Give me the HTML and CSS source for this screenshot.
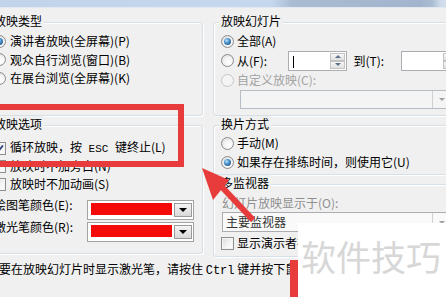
FILE: index.html
```html
<!DOCTYPE html>
<html lang="zh-CN">
<head>
<meta charset="utf-8">
<title>设置放映方式</title>
<link rel="stylesheet" href="styles.css">
</head>
<body>
<div class="titlebar"></div>
<div class="dialog">
  <section class="group g-left g-type">
    <div class="gtitle">放映类型</div>
    <div class="rows rows-type">
      <div class="row r185"><span class="radio on"></span><span>演讲者放映(全屏幕)(P)</span></div>
      <div class="row r185"><span class="radio"></span><span>观众自行浏览(窗口)(B)</span></div>
      <div class="row r185"><span class="radio"></span><span>在展台浏览(全屏幕)(K)</span></div>
    </div>
  </section>

  <section class="group g-right g-slides">
    <div class="gtitle">放映幻灯片</div>
    <div class="rows rows-slides">
      <div class="row r19"><span class="radio on"></span><span>全部(A)</span></div>
      <div class="row r20"><span class="radio"></span><span class="lbl-from">从(F):</span><span class="spin"><span class="caret"></span><span class="spinbtns"><span class="sb"><span class="tri-up"></span></span><span class="sb"><span class="tri-down"></span></span></span></span><span class="lbl-to">到(T):</span><span class="spin"><span class="nocaret"></span><span class="spinbtns"><span class="sb"><span class="tri-up"></span></span><span class="sb"><span class="tri-down"></span></span></span></span></div>
      <div class="row r19 dis"><span class="radio off"></span><span>自定义放映(C):</span></div>
      <div class="combo combo-custom"><span class="ctext"></span><span class="cbtn"><span class="ctri"></span></span></div>
    </div>
  </section>

  <section class="group g-left g-opts">
    <div class="gtitle">放映选项</div>
    <div class="rows rows-opts">
      <div class="row r18"><span class="check"><svg width="11" height="11" viewBox="0 0 11 11"><path d="M2 5.5 L4.5 8 L9 2.5" fill="none" stroke="#2b3f7c" stroke-width="1.8"/></svg></span><span>循环放映，按<span class="mono"> ESC </span>键终止(L)</span></div>
      <div class="row r18"><span class="check"></span><span>放映时不加旁白(N)</span></div>
      <div class="row r18"><span class="check"></span><span>放映时不加动画(S)</span></div>
    </div>
    <div class="colorrows">
      <div class="colorrow"><span class="clabel">绘图笔颜色(E):</span><span class="colorbox"><span class="swatch"></span><span class="ddbtn"><span class="ddtri"></span></span></span></div>
      <div class="colorrow"><span class="clabel">激光笔颜色(R):</span><span class="colorbox"><span class="swatch"></span><span class="ddbtn"><span class="ddtri"></span></span></span></div>
    </div>
  </section>

  <div class="rightcol">
    <section class="group g-right g-adv">
      <div class="gtitle">换片方式</div>
      <div class="rows rows-adv">
        <div class="row r19"><span class="radio"></span><span>手动(M)</span></div>
        <div class="row r19"><span class="radio on"></span><span>如果存在排练时间，则使用它(U)</span></div>
      </div>
    </section>
    <section class="group g-right g-mon">
      <div class="gtitle">多监视器</div>
      <div class="monlabel">幻灯片放映显示于(O):</div>
      <div class="combo combo-mon"><span class="ctext">主要监视器</span><span class="cbtn"><span class="ctri"></span></span></div>
      <div class="row r18 presenter"><span class="check"></span><span>显示演示者视图(W)</span></div>
    </section>
  </div>
</div>
<p class="hint">要在放映幻灯片时显示激光笔，请按住 <span class="mono12">Ctrl</span> 键并按下鼠标左键。</p>

<div class="mark-box"></div>
<svg class="mark-arrow" width="446" height="297" viewBox="0 0 446 297">
  <line x1="221" y1="186" x2="253" y2="220" stroke="#e83c3c" stroke-width="6"/>
  <polygon points="202,168 229,180 213,200" fill="#e83c3c"/>
</svg>
<div class="mark-bar"></div>
<div class="watermark">软件技巧</div>
</body>
</html>
```

FILE: styles.css
```css
* { box-sizing: border-box; }
html, body { margin: 0; padding: 0; }
body {
  width: 446px;
  height: 297px;
  overflow: hidden;
  position: relative;
  background: #f0f0f0;
  font-family: "Noto Sans CJK SC", "Noto Sans", sans-serif;
  font-size: 12px;
  line-height: 16px;
  color: #000;
  white-space: nowrap;
}

.titlebar {
  height: 8px;
  border-bottom: 1px solid #e2e9f1;
  background: linear-gradient(to right, #c1d4ea 0, #c6d8ed 272px, #a9bcd2 292px, #a2b5cc 420px, #abbdd2 432px, #cbd9ea 440px, #d3dfec 446px);
}

.dialog {
  display: grid;
  grid-template-columns: 217px 248px;
  grid-template-rows: 94px auto;
  column-gap: 10px;
  row-gap: 9px;
  margin: 14px 0 0 -14px;
  width: max-content;
}

.group {
  border: 1px solid #d5dfe5;
  border-radius: 3px;
  box-shadow: inset 1px 1px 0 #fff, 1px 1px 0 #fff;
}
.gtitle {
  margin: -10px 0 0 5px;
  padding: 0 2px;
  width: max-content;
  height: 16px;
  background: #f0f0f0;
}

.g-type, .g-slides { height: 94px; }
.g-opts { height: 129px; align-self: start; }
.rightcol { display: flex; flex-direction: column; gap: 9px; }
.g-adv { height: 50px; }
.g-mon { height: 73px; }

.row { display: flex; align-items: center; gap: 4px; padding-left: 6px; }
.g-right .row { gap: 3px; padding-left: 7px; }
.r185 { height: 18.5px; }
.r18 { height: 18px; }
.r19 { height: 19px; }
.r20 { height: 20px; }

.rows-type { margin-top: 3px; }
.rows-slides { margin-top: 2.5px; }
.rows-opts { margin-top: 7px; }
.rows-adv { margin-top: 1.5px; }

.dis { color: #a3a3a3; }

/* radio */
.radio {
  width: 13px; height: 13px; flex: none;
  border-radius: 50%;
  border: 1px solid #8b8c8d;
  background: radial-gradient(circle at 60% 65%, #ffffff 0, #f3f3f3 45%, #d3d3d3 100%);
  display: flex; align-items: center; justify-content: center;
}
.radio.on::after {
  content: "";
  width: 7px; height: 7px; border-radius: 50%;
  background: radial-gradient(circle at 38% 35%, #bfe6fb 0, #4a93cc 40%, #163f6c 100%);
}
.radio.off { border-color: #c6c6c6; background: #f4f4f4; }

/* checkbox */
.check {
  width: 13px; height: 13px; flex: none;
  border: 1px solid #8e8f8f;
  background: linear-gradient(135deg, #d9d9d9 0, #f6f6f6 60%, #fff 100%);
  box-shadow: inset 0 0 0 1px #f4f4f4;
  display: flex; align-items: center; justify-content: center;
}
.check svg { display: block; }

.mono { font-family: "Liberation Mono", monospace; font-size: 11px; }
.mono12 { font-family: "Liberation Mono", monospace; font-size: 12px; }

/* spin boxes */
.lbl-from { width: 49px; }
.lbl-to { width: 45px; margin-left: 3px; }
.spin {
  width: 59px; height: 20px; flex: none;
  border: 1px solid #abadb3;
  background: #fff;
  display: flex; justify-content: space-between;
  padding: 1px;
}
.caret { width: 1px; height: 12px; background: #000; margin: 3px 0 0 3px; }
.nocaret { width: 1px; }
.spinbtns { width: 15px; display: flex; flex-direction: column; gap: 0; }
.sb {
  flex: 1;
  border: 1px solid #c3c3c3;
  background: linear-gradient(#f7f7f7, #e0e0e0);
  display: flex; align-items: center; justify-content: center;
}
.tri-up { width: 0; height: 0; border-left: 3px solid transparent; border-right: 3px solid transparent; border-bottom: 3px solid #5d6f8b; }
.tri-down { width: 0; height: 0; border-left: 3px solid transparent; border-right: 3px solid transparent; border-top: 3px solid #5d6f8b; }

/* combos */
.combo {
  display: flex; justify-content: space-between; align-items: stretch;
  border: 1px solid #b7bdc4;
  background: #f4f4f4;
}
.combo-custom { margin: 0.5px 0 0 26px; width: 211px; height: 19px; }
.combo-mon { margin: 1px 0 0 8px; width: 229px; height: 20px; border-color: #abadb3; background: #f9f9f9; }
.ctext { padding-left: 3px; color: #333; line-height: 18px; }
.cbtn {
  width: 18px; border-left: 1px solid #d0d0d0;
  display: flex; align-items: center; justify-content: center;
}
.ctri { width: 0; height: 0; border-left: 3px solid transparent; border-right: 3px solid transparent; border-top: 3px solid #a0a0a0; }

.monlabel { margin-top: 4px; padding-left: 8px; color: #8f8f8f; }
.presenter { margin-top: 2px; }

/* colour pickers */
.colorrows { margin-top: 7px; display: flex; flex-direction: column; gap: 2px; }
.colorrow { display: flex; align-items: flex-start; height: 20px; padding-left: 7px; }
.clabel { width: 93px; margin-top: -3px; }
.colorbox {
  width: 107px; height: 20px;
  border: 1px solid #a3a3a3;
  background: #fff;
  display: flex; gap: 2px;
  padding: 2px 1px 2px 3px;
}
.swatch { flex: 1; background: #f50a0a; margin-bottom: 2px; }
.ddbtn {
  width: 18px;
  border: 1px solid #9a9a9a;
  background: linear-gradient(#f4f4f4, #d9d9d9);
  display: flex; align-items: center; justify-content: center;
}
.ddtri { width: 0; height: 0; border-left: 4px solid transparent; border-right: 4px solid transparent; border-top: 4px solid #000; }

.hint { margin: 4px 0 0 -1px; }

/* annotations lying over the screenshot */
.mark-box {
  position: absolute; left: -10px; top: 104px;
  width: 194px; height: 63px;
  border: 6px solid #e83c3c;
}
.mark-arrow { position: absolute; left: 0; top: 0; }
.mark-bar {
  position: absolute; left: 290px; top: 260px;
  width: 8px; height: 37px;
  background: #e83c3c;
}
.watermark {
  position: absolute; left: 298px; top: 223px;
  width: 148px; height: 74px;
  background: #fff;
  color: #d7d7d7;
  font-size: 35px;
  line-height: 40px;
  padding: 13px 0 0 3px;
}
```
